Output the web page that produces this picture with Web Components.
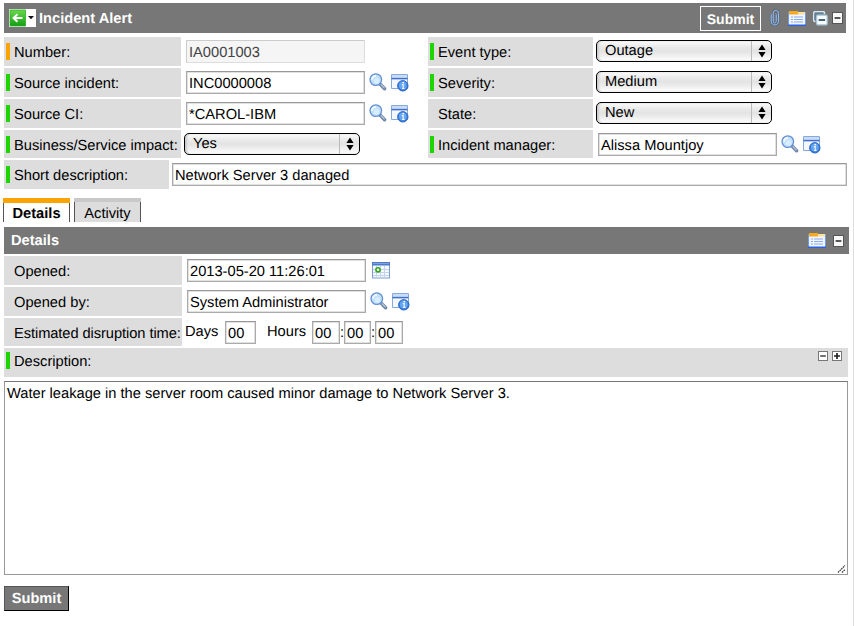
<!DOCTYPE html>
<html lang="en">
<head>
<meta charset="utf-8">
<title>Incident Alert</title>
<style>
html,body{margin:0;padding:0;background:#fff;overflow:hidden}
body{font:14.67px/21px "Liberation Sans",Arial,sans-serif;color:#000;text-rendering:geometricPrecision}
</style>
</head>
<body>
<incident-form></incident-form>
<script>
const define = (name, css, html) => customElements.define(name, class extends HTMLElement {
  constructor() {
    super();
    this.attachShadow({mode: 'open'});
  }
  connectedCallback() {
    this.shadowRoot.innerHTML = `<style>*{box-sizing:border-box}${css}</style>${typeof html === 'function' ? html(this) : html}`;
  }
});

const icons = {
  search: [18, 18, `<path d="M11.3 11.3l4.3 4.4" stroke="#6d86a8" stroke-width="3.4" stroke-linecap="round"/><path d="M12.2 11.8l3 3.1" stroke="#b9c7d8" stroke-width="1.3" stroke-linecap="round"/><circle cx="6.8" cy="6.6" r="5.8" fill="#c3e1fb" stroke="#638fd6" stroke-width="1.3"/><path d="M3 6.8a4 4 0 0 1 4-4" stroke="#f2faff" stroke-width="1.8" fill="none"/><circle cx="7.6" cy="8" r="2.7" fill="#d8eefe"/>`],
  info: [18, 18, `<path d="M.5.5h16v14H.5z" fill="#f4f8fe" stroke="#86a8da"/><path d="M1 1h15v3H1z" fill="#c9dcf5"/><path d="M.5 4.6h16" stroke="#3f70cb" stroke-width="1.5"/><circle cx="11.8" cy="11.8" r="5.2" fill="#3379db" stroke="#3068c4"/><circle cx="11.8" cy="11.5" r="3.9" fill="#65a6f1"/><path d="M10.8 10.6h1.4v4M11 14.5h2.6" stroke="#eef6ff" stroke-width="1.2" fill="none"/><circle cx="12.3" cy="8.6" r=".9" fill="#fff"/>`],
  calendar: [18, 17, `<rect x=".5" y=".5" width="17" height="15.5" fill="#f5f9fe" stroke="#7c9bd2"/><path d="M0 0h18v3.5H0z" fill="#4f7cc9"/><path d="M1 1h16v1H1z" fill="#7ba3e4"/><path d="M4.5 4v12M8.5 4v12M12.5 4v12M1 7.5h16M1 10.5h16M1 13.5h16" stroke="#c2d4ee"/><circle cx="6" cy="7.8" r="2.1" fill="#fff" stroke="#35a41c" stroke-width="1.6"/>`],
  clip: [12, 18, `<path d="M2.2 5.4v7.2c0 4.4 7.2 4.4 7.2 0V4.2c0-3.8-5.2-3.8-5.2 0v8c0 2.4 3 2.4 3 0V5.4" fill="none" stroke="#4d6688" stroke-width="2.2"/><path d="M2.2 5.4v7.2c0 4.4 7.2 4.4 7.2 0V4.2c0-3.8-5.2-3.8-5.2 0v8c0 2.4 3 2.4 3 0V5.4" fill="none" stroke="#a8c3e4" stroke-width="1"/>`],
  window: [18, 15, `<path d="M.5 1.5h17v13H.5z" fill="#f0f6ff" stroke="#6f99f0"/><path d="M0 13.5h18v1.5H0z" fill="#2d62de"/><path d="M1 0h9v3.5H1z" fill="#f6aa1c"/><path d="M10 1h7v2.5h-7z" fill="#ffdf93"/><path d="M3 6h2M6 6h9M3 8.5h2M6 8.5h9M3 11h2M6 11h9" stroke="#8cabea" stroke-width="1.2"/>`],
  stack: [15, 15, `<path d="M2.5 10.5H2a1.5 1.5 0 0 1-1.5-1.5V2.5A2 2 0 0 1 2.5.5H10a1.5 1.5 0 0 1 1.5 1.5v1" fill="#658094" stroke="#dce9ee" stroke-width="1.4"/><rect x="3.7" y="4.2" width="10.4" height="9.6" rx="1" fill="#f8fbfc" stroke="#adcbd7" stroke-width="1.2"/><path d="M5.7 9h6.4" stroke="#123d52" stroke-width="1.6"/>`],
  minus: [11, 12, `<rect x=".5" y=".5" width="10" height="11" fill="#f8f8f8" stroke="#555"/><path d="M2.6 6h5.8" stroke="#222" stroke-width="1.5"/>`],
  plain: [10, 10, `<rect x=".5" y=".5" width="9" height="9" fill="#fff" stroke="#777"/><path d="M2.2 5h5.6" stroke="#333" stroke-width="1.4"/>`],
  plus: [10, 10, `<rect x=".5" y=".5" width="9" height="9" fill="#fff" stroke="#777"/><path d="M2 5h6M5 2v6" stroke="#222" stroke-width="1.7"/>`],
  back: [27, 18, `<defs><linearGradient id="g" x2="0" y2="1"><stop stop-color="#69d94c"/><stop offset="1" stop-color="#149e13"/></linearGradient></defs><path d="M0 0h27v18H0z" fill="#fff"/><rect x="1" y="1" width="15.5" height="16" fill="url(#g)" stroke="#2aae23" stroke-width=".8"/><path d="M13.5 9H4.8M8.4 5.2L4.6 9l3.8 3.8" fill="none" stroke="#fff" stroke-width="2.1"/><path d="M19 7h6l-3 3.2z" fill="#111"/>`],
  grip: [10, 9, `<path d="M1 7.5l7-7M5 7.5l3-3" stroke="#333" stroke-width="1.2" stroke-dasharray="1.6 .7"/>`]
};

define('line-icon', ':host{display:block;flex:none}svg{display:block}', el => {
  const [w, h, art] = icons[el.getAttribute('name')];
  return `<svg width="${w}" height="${h}" viewBox="0 0 ${w} ${h}">${art}</svg>`;
});

define('text-field', `:host{display:block;width:179px;height:23px;flex:none}
 .box{height:100%;border:1px solid #aaa;border-top-color:#999;box-shadow:inset 0 0 0 .5px #c4c4c4;padding:2px 0 0 2px;line-height:21px;white-space:nowrap;overflow:hidden}
 :host([disabled]) .box{background:#f5f5f5;border-color:#ccc #ddd #ddd #ccc;color:#444;box-shadow:none}`,
 '<div class="box"><slot></slot></div>');

define('pick-list', `:host{display:block;width:176px;height:22px;flex:none}
 .box{height:100%;display:flex;border:1.5px solid #000;border-radius:5px;background:linear-gradient(#fdfdfd,#ececec 25%,#e3e3e3 50%,#ededed 70%,#fff);box-shadow:inset 2px 0 2px #ccc}
 span{flex:1;padding:0 0 0 8px}
 i{width:20px;border-left:1px solid #bbb;display:flex;align-items:center;justify-content:center}`,
 '<div class="box"><span><slot></slot></span><i><svg width="8" height="14"><path d="M4 .5L7.6 6H.4zM4 13.5L.4 8h7.2z"/></svg></i></div>');

define('form-row', `:host{display:grid;grid-template-columns:var(--label,177px) 1fr;height:29px}
 .label{display:flex;align-items:flex-start;background:#ddd;padding:var(--top,6px) 0 0 2px;white-space:nowrap}
 .mark{width:4px;height:17px;margin-right:4px;flex:none}
 .mandatory{background:#f9a400}.changed{background:#1fd500}
 .text{letter-spacing:var(--track,0)}
 .field{display:flex;align-items:flex-start;padding:3px 0 0 var(--inset,5px)}
 .field ::slotted(line-icon[name=search]){margin:0 4px 0 4px;padding-top:2px}
 .field ::slotted(line-icon[name=info]){padding-top:3px}
 .field ::slotted(line-icon[name=calendar]){margin:3px 0 0 6px}`,
 el => `<div class="label"><div class="mark ${el.getAttribute('mark') || ''}"></div><div class="text">${el.getAttribute('label')}</div></div><div class="field"><slot></slot></div>`);

define('title-bar', `:host{display:flex;align-items:center;background:#777;color:#fff;font-weight:bold}
 ::slotted(b){flex:1;padding-top:2px}`, '<slot></slot>');

define('tab-item', `:host{display:block;width:67px;height:24px;background:#ddd;border-top:4px solid #c9c9c9}
 div{height:20px;border:solid #555;border-width:0 1px;padding-top:2px;text-align:center;line-height:20px}
 :host([active]){background:#fff;border-top:5px solid #f9a400;font-weight:bold}
 :host([active]) div{height:19px;padding-top:1px}`, '<div><slot></slot></div>');

define('submit-button', `:host{display:flex;align-items:center;justify-content:center;font-weight:bold;font-size:14px;color:#fff;background:#777;border:1px solid #fff}
 :host([raised]){font-size:14.67px;border:1px solid;border-color:#555 #000 #000 #555}
 span{padding-top:2px}`, '<span><slot></slot></span>');

define('duration-field', `:host{display:flex}
 text-field{width:28px}
 .days{width:31px;margin:0 11px 0 5px}
 .hours{margin-right:5px;width:40px}.text{white-space:nowrap;padding-top:1px;line-height:20px}
 .day{width:35px}
 .colon{width:4px;padding-top:2px;overflow:visible}`,
 `<span class="text day">Days</span><text-field class="days">00</text-field><span class="text hours">Hours</span><text-field>00</text-field><span class="colon">:</span><text-field style="width:27px">00</text-field><span class="colon">:</span><text-field>00</text-field>`);

define('notes-area', `:host{display:grid;height:194px;border:1px solid #999;border-top-color:#777;padding:2px 0 0 2px}
 line-icon{align-self:end;justify-self:end}
 p,line-icon{grid-area:1/1;margin-block:0}`, '<p><slot></slot></p><line-icon name="grip"></line-icon>');

define('incident-form', `:host{display:block;height:626px;padding:3px 0 0 4px;border-right:1px solid #ddd}
 .top{width:842px;height:30px;padding:0 3px 0 5px}
 .top b{padding:2px 0 0 3px}
 .top submit-button{width:61px;height:25px;margin-right:8px}
 .columns{display:grid;grid-template-columns:424px 419px;margin-top:4px}
 .rows{display:grid;gap:2px;grid-template-rows:29px 29px 29px 28px}
 form-row.s,.time{height:28px}
 .right{--label:165px}
 .right form-row.pick{--inset:3px}
 .left form-row.pick{--inset:3px}
 .short{--label:165px;--inset:3px;margin-top:2px;width:843px}
 .short text-field{width:675px}
 .tabs{display:flex;gap:4px;margin:9px 0 5px -1px}
 .mid{width:845px;height:27px;padding:0 5px 0 7px;margin-bottom:2px}
 .mid line-icon[name=minus]{margin:1px 0 0 7px}
 .details{--label:178px;grid-template-rows:29px 29px 28px}
 .time{--inset:3px;--track:-.07px}
 .desc{display:grid;grid-template-columns:1fr 6px;background:#ddd;width:844px;height:29px;margin:2px 0 4px}
 .desc form-row{--label:100px;--top:4px}
 .toggles{display:flex;gap:4px;justify-content:flex-end;width:100%;margin-top:0}
 notes-area{width:844px;margin-bottom:11px}
 .end{width:65px;height:25px}`,
`<title-bar class="top"><line-icon name="back"></line-icon><b>Incident Alert</b><submit-button>Submit</submit-button><line-icon name="clip"></line-icon><line-icon name="window" style="margin-left:7px"></line-icon><line-icon name="stack" style="margin-left:7px"></line-icon><line-icon name="minus" style="margin-left:4px"></line-icon></title-bar>
<div class="columns">
<div class="rows left">
 <form-row label="Number:" mark="mandatory"><text-field disabled>IA0001003</text-field></form-row>
 <form-row label="Source incident:" mark="changed"><text-field>INC0000008</text-field><line-icon name="search"></line-icon><line-icon name="info"></line-icon></form-row>
 <form-row label="Source CI:" mark="changed"><text-field>*CAROL-IBM</text-field><line-icon name="search"></line-icon><line-icon name="info"></line-icon></form-row>
 <form-row class="pick s" label="Business/Service impact:" mark="changed"><pick-list>Yes</pick-list></form-row>
</div>
<div class="rows right">
 <form-row class="pick" label="Event type:" mark="changed"><pick-list>Outage</pick-list></form-row>
 <form-row class="pick" label="Severity:" mark="changed"><pick-list>Medium</pick-list></form-row>
 <form-row class="pick" label="State:"><pick-list>New</pick-list></form-row>
 <form-row class="s" label="Incident manager:" mark="changed"><text-field>Alissa Mountjoy</text-field><line-icon name="search"></line-icon><line-icon name="info"></line-icon></form-row>
</div></div>
<form-row class="short" label="Short description:" mark="changed"><text-field>Network Server 3 danaged</text-field></form-row>
<div class="tabs"><tab-item active>Details</tab-item><tab-item>Activity</tab-item></div>
<title-bar class="mid"><b>Details</b><line-icon name="window"></line-icon><line-icon name="minus"></line-icon></title-bar>
<div class="rows details">
 <form-row label="Opened:"><text-field>2013-05-20 11:26:01</text-field><line-icon name="calendar"></line-icon></form-row>
 <form-row label="Opened by:"><text-field>System Administrator</text-field><line-icon name="search"></line-icon><line-icon name="info"></line-icon></form-row>
 <form-row class="time" label="Estimated disruption time:"><duration-field></duration-field></form-row>
</div>
<div class="desc"><form-row label="Description:" mark="changed"><div class="toggles"><line-icon name="plain"></line-icon><line-icon name="plus"></line-icon></div></form-row></div>
<notes-area>Water leakage in the server room caused minor damage to Network Server 3.</notes-area>
<submit-button class="end" raised>Submit</submit-button>`);
</script>
</body>
</html>
